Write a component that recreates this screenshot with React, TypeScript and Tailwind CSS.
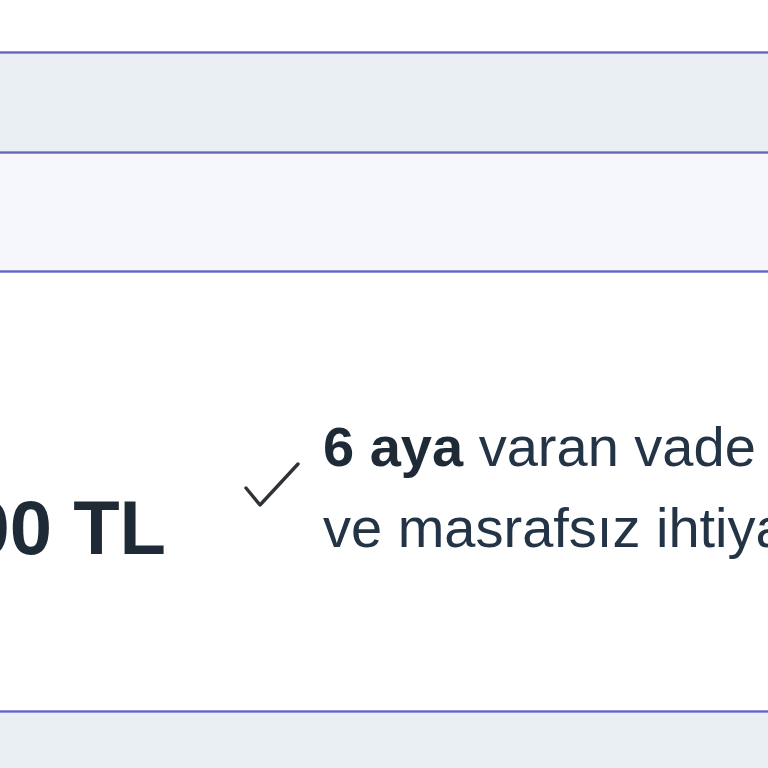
export default function App() {
  const line = (
    <div className="h-[3px] w-full bg-[linear-gradient(to_bottom,#b3b3ea,#6464c0_40%,#6464c0_60%,#b3b3ea)]" />
  );
  return (
    <div className="w-full h-[768px] overflow-hidden bg-white font-['Liberation_Sans',Arial,sans-serif]">
      <div className="h-[51px] bg-white" />
      {line}
      <div className="h-[97px] bg-[#eaeff3]" />
      {line}
      <div className="h-[116px] bg-[#f5f7fc]" />
      {line}
      <div className="h-[437px] bg-white flex items-start">
        <div className="w-[166px] shrink-0 overflow-hidden flex justify-end mt-[217px]">
          <span className="whitespace-nowrap text-[76px] leading-[76px] font-bold text-[#1e2a36]">
            1.000 TL
          </span>
        </div>
        <div className="ml-[78px] mt-[188px] shrink-0">
          <svg width="56" height="48" viewBox="0 0 56 48" fill="none">
            <path d="M2 27 L16 44 L54 3" stroke="#2f3338" strokeWidth="3.4" strokeLinecap="round" strokeLinejoin="round" />
          </svg>
        </div>
        <div className="ml-[23px] mt-[133px] whitespace-nowrap text-[56px] leading-[81px] text-[#233446]">
          <span className="font-bold text-[#1e2a36]">6 aya</span> varan vade
          <br />
          ve masrafsız ihtiyaç kredisi
        </div>
      </div>
      {line}
      <div className="h-[60px] bg-[#eaeff3]" />
    </div>
  );
}
